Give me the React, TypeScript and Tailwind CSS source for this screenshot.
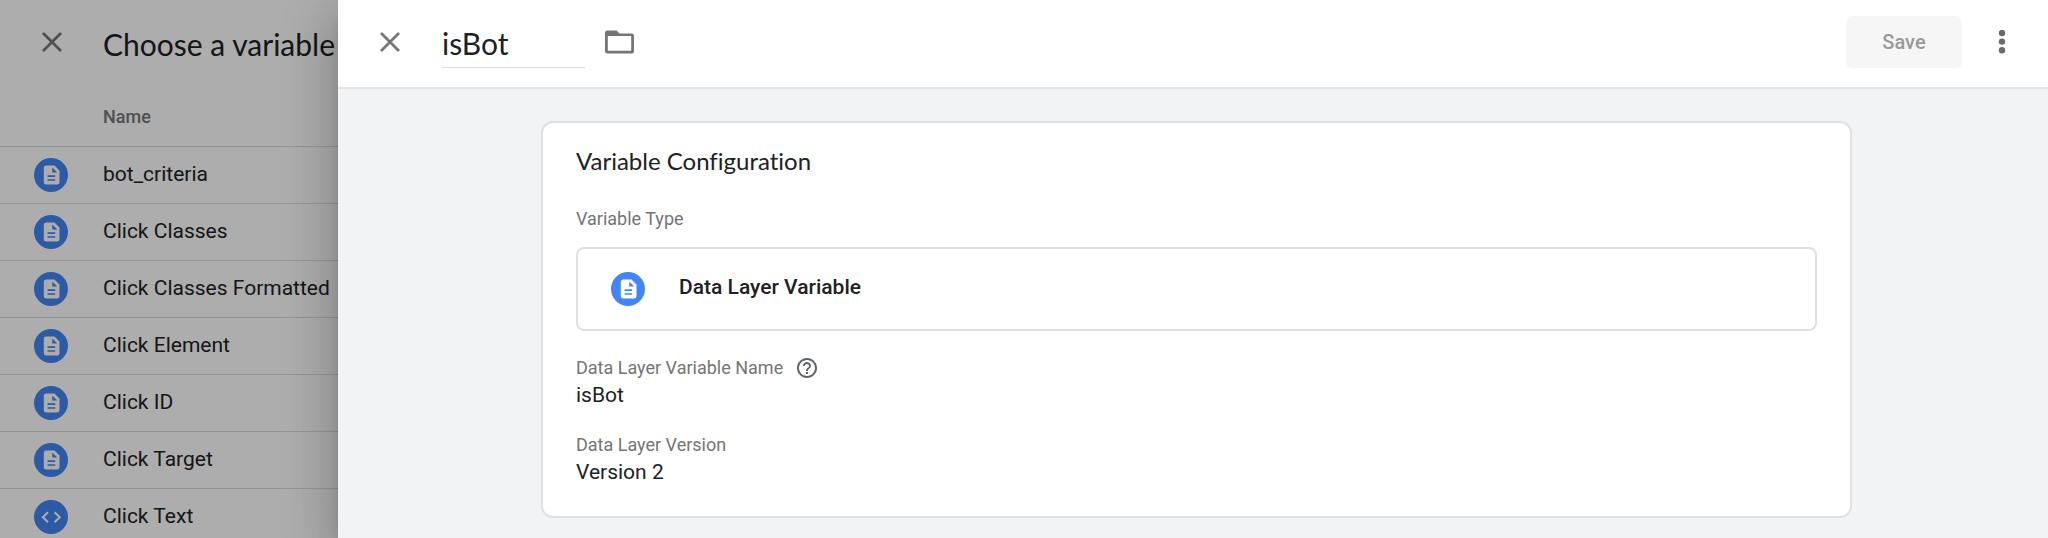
const variables = [
  { name: "bot_criteria", kind: "document" },
  { name: "Click Classes", kind: "document" },
  { name: "Click Classes Formatted", kind: "document" },
  { name: "Click Element", kind: "document" },
  { name: "Click ID", kind: "document" },
  { name: "Click Target", kind: "document" },
  { name: "Click Text", kind: "code" },
];

function CloseIcon() {
  return (
    <svg viewBox="0 0 20 20" className="size-5 text-[#757575]" fill="none" stroke="currentColor" strokeWidth="2.7" aria-hidden="true">
      <path d="M1 1l18 18M19 1L1 19" />
    </svg>
  );
}

function VariableIcon({ kind }: { kind: string }) {
  return (
    <svg viewBox="0 0 34 34" className="block size-[34px]" aria-hidden="true">
      <circle cx="17" cy="17" r="17" fill="#4285f4" />
      {kind === "document" ? (
        <>
          <path d="M12.2 7.4h8.3l5 5v11.8a2.4 2.4 0 0 1-2.4 2.4H12.2a2.4 2.4 0 0 1-2.4-2.4V9.8a2.4 2.4 0 0 1 2.4-2.4z" fill="#fff" />
          <path d="M18.3 9.6v4.9h4.9z" fill="#4285f4" />
          <path d="M13.6 18.1h7.6M13.6 22h7.6" stroke="#4285f4" strokeWidth="1.7" />
        </>
      ) : (
        <path d="M14 12.2L8.9 17.2l5.1 5M20.6 12.2l5.1 5-5.1 5" fill="none" stroke="#fff" strokeWidth="2" />
      )}
    </svg>
  );
}

export default function App() {
  return (
    <div className="flex min-h-screen overflow-hidden bg-white font-['Roboto','Liberation_Sans',sans-serif] text-[#202124]">
      <aside className="relative h-screen w-[338px] shrink-0 overflow-hidden bg-white whitespace-nowrap">
        <header className="flex h-[88px] items-center gap-[41px] pb-1 pl-[42px]">
          <button type="button" aria-label="Close variable list">
            <CloseIcon />
          </button>
          <h1 className="pt-1 font-['Lato','Roboto',sans-serif] text-3xl leading-9">Choose a variable</h1>
        </header>
        <table className="w-full border-collapse text-left">
          <thead>
            <tr className="h-[58px] border-b border-[#dadce0]">
              <th aria-label="Type" className="w-[103px]" />
              <th className="p-0 text-lg leading-6 font-medium text-[#757575]">Name</th>
            </tr>
          </thead>
          <tbody>
            {variables.map((variable) => (
              <tr key={variable.name} className="h-[57px] border-b border-[#dadce0]">
                <td className="p-0 pl-[34px]">
                  <VariableIcon kind={variable.kind} />
                </td>
                <td className="p-0 pb-0.5 text-[21px] leading-6">{variable.name}</td>
              </tr>
            ))}
          </tbody>
        </table>
        <div className="absolute inset-0 bg-black/32" />
      </aside>

      <main className="relative flex min-w-0 flex-1 flex-col bg-[#f1f3f4] shadow-[0_14px_17px_-9px_rgba(0,0,0,0.2),0_27px_41px_3px_rgba(0,0,0,0.14),0_10px_51px_9px_rgba(0,0,0,0.12)]">
        <header className="flex h-[89px] items-center border-b-2 border-[#e3e5e7] bg-white pr-[41px] pb-1 pl-[42px]">
          <button type="button" aria-label="Close variable" className="mr-[42px]">
            <CloseIcon />
          </button>
          <input
            type="text"
            aria-label="Variable name"
            defaultValue="isBot"
            className="mt-1 h-12 w-[143px] border-b border-[#dadce0] bg-transparent font-['Lato','Roboto',sans-serif] text-3xl outline-none"
          />
          <button type="button" aria-label="Move to folder" className="ml-5">
            <svg viewBox="0 0 29 24" className="h-6 w-[29px]" aria-hidden="true">
              <path
                fill="#757575"
                fillRule="evenodd"
                d="M2.500 .5h9l3 3H26.500a2.500 2.500 0 0 1 2.500 2.500V21a2.500 2.500 0 0 1-2.500 2.500H2.500a2.500 2.500 0 0 1-2.500-2.500V3a2.500 2.500 0 0 1 2.500-2.500zM2.800 6v14.800h23.400V6z"
              />
            </svg>
          </button>
          <button
            type="button"
            disabled
            className="ml-auto h-[52px] w-[116px] rounded-md bg-[#f6f6f6] text-xl font-medium text-[#999]"
          >
            Save
          </button>
          <button type="button" aria-label="More options" className="ml-[35px]">
            <svg viewBox="0 0 10 24" className="h-6 w-2.5 text-[#6b6b6b]" fill="currentColor" aria-hidden="true">
              <circle cx="5" cy="3" r="3.200" />
              <circle cx="5" cy="11.600" r="3.200" />
              <circle cx="5" cy="20.200" r="3.200" />
            </svg>
          </button>
        </header>

        <section className="mt-8 mr-[196px] ml-[203px] rounded-xl border-2 border-[#dfe1e5] bg-white px-[33px] pt-[22px] pb-[30px]">
          <h2 className="font-['Lato','Roboto',sans-serif] text-2xl leading-8 [font-variant-ligatures:none]">Variable Configuration</h2>
          <h3 className="mt-[30px] text-lg leading-6 text-[#757575]">Variable Type</h3>
          <button type="button" className="mt-4 flex h-[84px] w-full items-center gap-[34px] rounded-lg border-2 border-[#dfe1e5] px-[33px] text-left">
            <VariableIcon kind="document" />
            <span className="pb-1 text-[21px] leading-6 font-medium">Data Layer Variable</span>
          </button>
          <dl className="mt-[25px]">
            <dt className="flex items-center gap-3 text-lg leading-6 text-[#757575]">
              Data Layer Variable Name
              <button type="button" aria-label="Help" className="text-[#5f6368]">
                <svg viewBox="0 0 24 24" className="size-6" fill="currentColor" aria-hidden="true">
                  <path d="M11 18h2v-2h-2v2zm1-16C6.480 2 2 6.480 2 12s4.480 10 10 10 10-4.480 10-10S17.520 2 12 2zm0 18c-4.410 0-8-3.590-8-8s3.590-8 8-8 8 3.590 8 8-3.590 8-8 8zm0-14c-2.210 0-4 1.790-4 4h2c0-1.100.9-2 2-2s2 .9 2 2c0 2-3 1.750-3 5h2c0-2.250 3-2.500 3-5 0-2.210-1.790-4-4-4z" />
                </svg>
              </button>
            </dt>
            <dd className="mt-px text-[21px] leading-7">isBot</dd>
            <dt className="mt-6 text-lg leading-6 text-[#757575]">Data Layer Version</dt>
            <dd className="mt-px text-[21px] leading-7">Version 2</dd>
          </dl>
        </section>
      </main>
    </div>
  );
}
